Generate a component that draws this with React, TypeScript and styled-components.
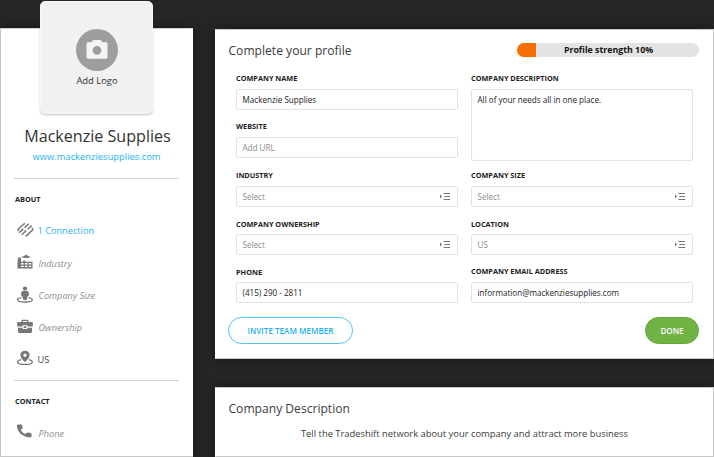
import React from "react";
import styled, { createGlobalStyle } from "styled-components";

const GlobalStyle = createGlobalStyle`
  * { box-sizing: border-box; }
  html, body { margin: 0; padding: 0; overflow: hidden; background: #262626; }
  body { font-family: "Open Sans", "Noto Sans", sans-serif; color: #3c3c3c; }
`;

const Page = styled.div`
  width: 714px;
  height: 457px;
  display: flex;
  gap: 22px;
  overflow: hidden;
  background: #262626;
  padding-left: 1px;
`;

const Sidebar = styled.aside`
  width: 192px;
  height: 429px;
  margin-top: 28px;
  flex: none;
  display: flex;
  flex-direction: column;
  background: #fff;
  border-top: 1px solid #d0d0d0;
  border-bottom: 1px solid #c8c8c8;
  box-shadow: -1px 0 0 #c6c6c6, 0 0 12px rgba(0, 0, 0, 0.4);
`;

const LogoTile = styled.div`
  width: 113px;
  height: 113px;
  margin: -28px auto 0 39px;
  flex: none;
  display: flex;
  flex-direction: column;
  align-items: center;
  padding-top: 27px;
  border-radius: 5px;
  background: #f1f1f1;
  border: 1px solid #f7f7f7;
  box-shadow: 0 1px 2px rgba(0, 0, 0, 0.24);
`;

const CameraBadge = styled.div`
  width: 42px;
  height: 42px;
  border-radius: 50%;
  background: #9e9e9e;
  display: flex;
  align-items: center;
  justify-content: center;
`;

const LogoLabel = styled.div`
  margin: 3px 0 0 1px;
  font-size: 9.4px;
  line-height: 14px;
  color: #333;
`;

const CompanyName = styled.h1`
  margin: 11px 0 0 1px;
  font-size: 16.1px;
  line-height: 22px;
  font-weight: 400;
  text-align: center;
  color: #333;
  white-space: nowrap;
`;

const SiteLink = styled.a`
  margin: 3px 1px 0 0;
  height: 14px;
  font-size: 9.4px;
  line-height: 14px;
  text-align: center;
  color: #1fb4f1;
`;

const Rule = styled.hr<{ $top: number }>`
  width: 165px;
  height: 1px;
  margin: ${(p) => p.$top}px 0 0 13px;
  border: 0;
  flex: none;
  background: #d3d3d3;
`;

const SectionTitle = styled.h2`
  margin: 14px 0 0 14px;
  font-size: 7.3px;
  line-height: 12px;
  font-weight: 700;
  color: #222;
`;

const List = styled.ul<{ $top: number }>`
  list-style: none;
  margin: ${(p) => p.$top}px 0 0 15px;
  padding: 0;
`;

const Item = styled.li<{ $tone?: "link" | "muted" | "plain" }>`
  height: 32px;
  display: flex;
  align-items: center;
  font-size: 9.2px;
  font-style: ${(p) => (p.$tone === "muted" ? "italic" : "normal")};
  color: ${(p) =>
    p.$tone === "link" ? "#1fb4f1" : p.$tone === "muted" ? "#8e8e8e" : "#444"};
  svg { flex: none; margin-right: ${(p) => (p.$tone === "muted" ? 4.5 : 3.5)}px; }
  span { padding-top: ${(p) => (p.$tone === "link" ? 0 : 2)}px; }
`;

const Main = styled.main`
  flex: none;
  width: 499px;
  padding-top: 29px;
  display: flex;
  flex-direction: column;
  gap: 28px;
`;

const Card = styled.section<{ $height: number }>`
  height: ${(p) => p.$height}px;
  flex: none;
  background: #fff;
  border: 1px solid #c8c8c8;
  border-left-color: #fff;
  box-shadow: 0 0 12px rgba(0, 0, 0, 0.4);
`;

const CardHeader = styled.header`
  display: flex;
  justify-content: space-between;
  align-items: flex-start;
  padding: 12px 14px 0 12.5px;
`;

const CardTitle = styled.h2`
  margin: 0;
  font-size: 12.1px;
  line-height: 18px;
  font-weight: 400;
  color: #3c3c3c;
`;

const Strength = styled.div`
  width: 182px;
  height: 14px;
  margin-top: 1px;
  border-radius: 7px;
  overflow: hidden;
  display: grid;
  background: #e3e3e3;
  > * { grid-area: 1 / 1; }
`;

const StrengthBar = styled.div`
  width: 19px;
  background: #f96e00;
`;

const StrengthText = styled.div`
  font-size: 8.8px;
  line-height: 14px;
  font-weight: 700;
  text-align: center;
  color: #111;
  padding-left: 1px;
`;

const Form = styled.div`
  display: grid;
  grid-template-columns: 222px 222px;
  column-gap: 13px;
  padding: 0 0 0 20px;
  margin-top: 9px;
`;

const Field = styled.div<{ $tall?: boolean; $pitch?: number }>`
  grid-row: ${(p) => (p.$tall ? "span 2" : "auto")};
  height: ${(p) => p.$pitch ?? 48}px;
  padding-top: 3px;
`;

const Label = styled.div<{ $lift?: boolean }>`
  font-size: 7.3px;
  line-height: 10px;
  height: 17px;
  padding-top: ${(p) => (p.$lift ? 1 : 2)}px;
  font-weight: 700;
  color: #1c1c1c;
`;

const Box = styled.div<{ $placeholder?: boolean; $height?: number }>`
  height: ${(p) => p.$height ?? 21}px;
  display: flex;
  justify-content: space-between;
  padding: 0 6px 0 5.5px;
  border: 1px solid #e2e2e2;
  border-radius: 2px;
  background: #fff;
  font-size: 8.1px;
  line-height: 19px;
  color: ${(p) => (p.$placeholder ? "#8b8b8b" : "#222")};
  svg { margin-top: 4px; }
`;

const Actions = styled.div`
  display: flex;
  justify-content: space-between;
  padding: 0 14px 0 12px;
  margin-top: 7px;
`;

const Button = styled.button<{ $primary?: boolean }>`
  width: ${(p) => (p.$primary ? 54 : 125)}px;
  height: 27px;
  padding: 0;
  border-radius: 14px;
  border: 1px solid ${(p) => (p.$primary ? "#65a636" : "#4fc2f4")};
  background: ${(p) => (p.$primary ? "#70b244" : "#fff")};
  color: ${(p) => (p.$primary ? "#fff" : "#1fb1ef")};
  font: 600 8.1px/24px "Open Sans", sans-serif;
`;

const Blurb = styled.p`
  margin: 8px 0 0;
  font-size: 9.4px;
  line-height: 16px;
  text-align: center;
  color: #3c3c3c;
`;

const gray = "#777";

const CameraIcon = () => (
  <svg width="22" height="20" viewBox="0 0 22 20">
    <path fill="#f4f4f4" fillRule="evenodd" d="M2.2 2.2h3.3L7.3-.1h7.4l1.8 2.3h3.3c.9 0 1.7.7 1.7 1.6v13.3c0 .9-.8 1.6-1.7 1.6H2.2c-.9 0-1.7-.7-1.7-1.6V3.8c0-.9.8-1.6 1.7-1.6zM11 6a4.4 4.4 0 1 0 0 8.8 4.4 4.4 0 0 0 0-8.8z" />
  </svg>
);

const LinkIcon = () => (
  <svg width="18" height="16" viewBox="0 0 18 16" fill="none" stroke={gray} strokeWidth="1.5">
    <path d="M8.800 1.200L2.200 7.200Q1.600 8.200 2.800 8.800M12.900 1.700L8.600 5.600M7.300 6.900L3.200 10.800M15.700 3.600L11.700 7.200M10.300 8.500L5.700 12.800M15.700 6.300Q17.400 7 16.600 8L9.700 14.400" />
  </svg>
);

const FactoryIcon = () => (
  <svg width="18" height="16" viewBox="0 0 18 16">
    <path fill={gray} d="M2 3.500h3v4.300h2.200V6.400h2v1.400h7.300V14.500H1.500V9z" />
    <path fill={gray} d="M5.800 2.400h1.400C7.600 1.600 8.200 1.500 8.700 1.800 9.500.5 11 .5 11.600 1.800c.6-.2 1 .1 1.300.6h1.400v1h-1.400c-.5.9-1.400.8-1.700.4-.7.6-1.600.5-2 0-.7.5-1.700.4-2-.4H5.800z" />
    <path fill="#fff" d="M5 9h2.700v1.400H5zM8.900 9h2.700v1.400H8.900zM12.800 9h2.400v1.400h-2.400zM5 11.700h2.700v1.300H5zM8.900 11.700h2.700v1.300H8.900zM12.800 11.700h2.400v1.300h-2.400z" />
  </svg>
);

const PersonIcon = () => (
  <svg width="18" height="17" viewBox="0 0 18 17">
    <circle cx="9" cy="2.5" r="2.1" fill={gray} />
    <path fill={gray} d="M7.2 4.7h3.6c1.3.2 2 1.4 2.2 3.6 0 1.3-.6 2-1.6 2.200l-.7 3.500H7.300l-.7-3.500C5.600 10.300 5 9.600 5 8.300c.2-2.200.9-3.400 2.200-3.600z" />
    <path fill="none" stroke={gray} strokeWidth="1.3" d="M5.600 11.700C3 12.100 1.700 12.900 1.700 13.700c0 1.300 3 2.300 7.300 2.300s7.300-1 7.300-2.300c0-.8-1.300-1.600-3.900-2" />
  </svg>
);

const BriefcaseIcon = () => (
  <svg width="18" height="15" viewBox="0 0 18 15">
    <path fill={gray} fillRule="evenodd" d="M5.500 3V1.800C5.500 1.200 6 .8 6.600.8h4.800c.6 0 1.100.4 1.100 1V3h3.100c.7 0 1.200.5 1.200 1.200v3.300h-5.400V6.300H6.600v1.200H1.200V4.200C1.200 3.500 1.700 3 2.400 3zM7 3h4v-.9H7zM2 8.700h4.600v1.400h4.800V8.700H16v4.100c0 .7-.5 1.200-1.200 1.200H3.200c-.7 0-1.200-.5-1.200-1.200zM7.700 7.300h2.600v1.700H7.700z" />
  </svg>
);

const PinIcon = () => (
  <svg width="18" height="16" viewBox="0 0 18 16">
    <path fill={gray} fillRule="evenodd" d="M9 .8c2.700 0 4.600 1.800 4.600 4.300 0 3.200-4.600 7.200-4.600 7.200S4.400 8.300 4.400 5.100C4.400 2.600 6.300.8 9 .8zm0 2.700a1.700 1.700 0 1 0 0 3.400 1.700 1.700 0 0 0 0-3.400z" />
    <path fill="none" stroke={gray} strokeWidth="1.3" d="M5.100 9.700C2.800 10.200 1.700 11 1.700 11.900c0 1.500 3.300 2.500 7.300 2.500s7.300-1 7.300-2.500c0-.9-1.100-1.700-3.400-2.200" />
  </svg>
);

const PhoneIcon = () => (
  <svg width="18" height="18" viewBox="0 0 18 18">
    <path fill={gray} d="M1.800 1.500h3.600c.5 0 .7.3.8.8l.4 2.500c0 .4-.1.700-.4.900L4.700 7c1 1.800 2.500 3.100 4.500 3.900l1.700-1.200c.3-.2.600-.3.900-.2l2.900.5c.5.100.8.400.8.900v2.600c0 .5-.4.800-.9.800C7 14.300 1 9 1 2.400c0-.5.3-.9.800-.9z" />
  </svg>
);

const SelectIcon = () => (
  <svg width="12" height="11" viewBox="0 0 12 11">
    <path fill="#777" d="M1 3.600L3.100 5.500 1 7.400z" />
    <path stroke="#777" d="M4.500 2.500H11M5.500 5.500H11M4.500 8.500H11" />
  </svg>
);

type FieldData = { label: string; value: string; kind?: "empty" | "select" | "area"; pitch?: number; lift?: boolean };

const fields: FieldData[] = [
  { label: "COMPANY NAME", value: "Mackenzie Supplies", lift: true },
  { label: "COMPANY DESCRIPTION", value: "All of your needs all in one place.", kind: "area", pitch: 97, lift: true },
  { label: "WEBSITE", value: "Add URL", kind: "empty", pitch: 49, lift: true },
  { label: "INDUSTRY", value: "Select", kind: "select", lift: true },
  { label: "COMPANY SIZE", value: "Select", kind: "select", lift: true },
  { label: "COMPANY OWNERSHIP", value: "Select", kind: "select" },
  { label: "LOCATION", value: "US", kind: "select" },
  { label: "PHONE", value: "(415) 290 - 2811", pitch: 48 },
  { label: "COMPANY EMAIL ADDRESS", value: "information@mackenziesupplies.com", pitch: 48, lift: true },
];

export default function App() {
  return (
    <>
      <GlobalStyle />
      <Page>
        <Sidebar>
          <LogoTile>
            <CameraBadge><CameraIcon /></CameraBadge>
            <LogoLabel>Add Logo</LogoLabel>
          </LogoTile>
          <CompanyName>Mackenzie Supplies</CompanyName>
          <SiteLink>www.mackenziesupplies.com</SiteLink>
          <Rule $top={14} />
          <SectionTitle>ABOUT</SectionTitle>
          <List $top={9}>
            <Item $tone="link"><LinkIcon /><span>1 Connection</span></Item>
            <Item $tone="muted"><FactoryIcon /><span>Industry</span></Item>
            <Item $tone="muted"><PersonIcon /><span>Company Size</span></Item>
            <Item $tone="muted"><BriefcaseIcon /><span>Ownership</span></Item>
            <Item><PinIcon /><span>US</span></Item>
          </List>
          <Rule $top={6} />
          <SectionTitle>CONTACT</SectionTitle>
          <List $top={9}>
            <Item $tone="muted"><PhoneIcon /><span>Phone</span></Item>
          </List>
        </Sidebar>
        <Main>
          <Card $height={330}>
            <CardHeader>
              <CardTitle>Complete your profile</CardTitle>
              <Strength>
                <StrengthBar />
                <StrengthText>Profile strength 10%</StrengthText>
              </Strength>
            </CardHeader>
            <Form>
              {fields.map((f) => (
                <Field key={f.label} $tall={f.kind === "area"} $pitch={f.pitch}>
                  <Label $lift={f.lift}>{f.label}</Label>
                  <Box $placeholder={f.kind === "empty" || f.kind === "select"} $height={f.kind === "area" ? 72 : 21}>
                    {f.value}
                    {f.kind === "select" && <SelectIcon />}
                  </Box>
                </Field>
              ))}
            </Form>
            <Actions>
              <Button>INVITE TEAM MEMBER</Button>
              <Button $primary>DONE</Button>
            </Actions>
          </Card>
          <Card $height={70}>
            <CardHeader>
              <CardTitle>Company Description</CardTitle>
            </CardHeader>
            <Blurb>Tell the Tradeshift network about your company and attract more business</Blurb>
          </Card>
        </Main>
      </Page>
    </>
  );
}
